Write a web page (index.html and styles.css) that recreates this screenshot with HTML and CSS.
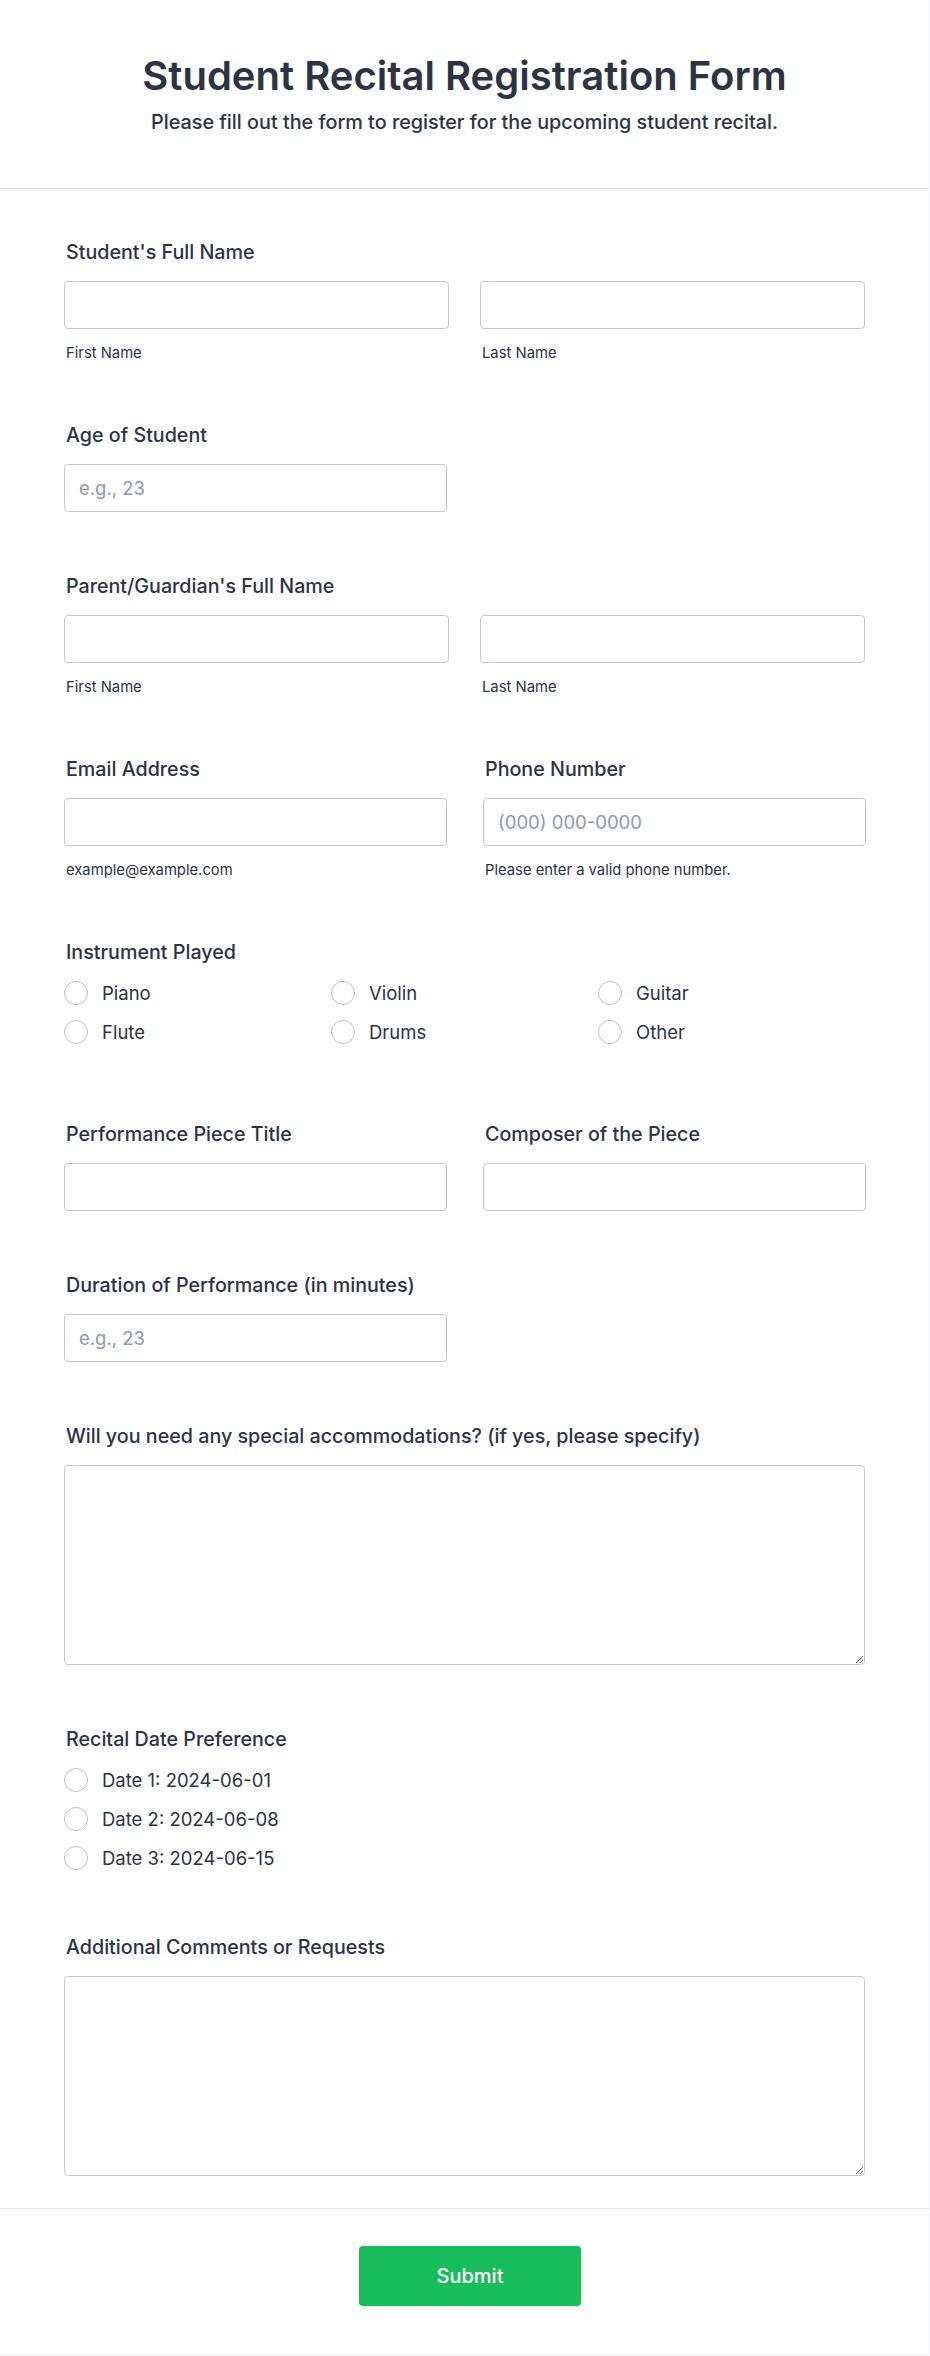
FILE: index.html
```html
<!DOCTYPE html>
<html lang="en">
<head>
<meta charset="utf-8">
<title>Student Recital Registration Form</title>
<link rel="stylesheet" href="styles.css">
</head>
<body>
<form class="form">
  <header class="form-header">
    <h1 class="form-title">Student Recital Registration Form</h1>
    <p class="form-subtitle">Please fill out the form to register for the upcoming student recital.</p>
  </header>

  <div class="form-body">
    <div class="field field-sub">
      <label class="label">Student's Full Name</label>
      <div class="name-row">
        <div class="col"><input class="input" type="text"><span class="sub">First Name</span></div>
        <div class="col"><input class="input" type="text"><span class="sub">Last Name</span></div>
      </div>
    </div>

    <div class="pair">
      <div class="field">
        <label class="label">Age of Student</label>
        <input class="input" type="text" placeholder="e.g., 23">
      </div>
    </div>

    <div class="field field-sub">
      <label class="label">Parent/Guardian's Full Name</label>
      <div class="name-row">
        <div class="col"><input class="input" type="text"><span class="sub">First Name</span></div>
        <div class="col"><input class="input" type="text"><span class="sub">Last Name</span></div>
      </div>
    </div>

    <div class="pair">
      <div class="field field-sub">
        <label class="label">Email Address</label>
        <input class="input" type="email">
        <span class="sub">example@example.com</span>
      </div>
      <div class="field field-sub">
        <label class="label">Phone Number</label>
        <input class="input" type="tel" placeholder="(000) 000-0000">
        <span class="sub">Please enter a valid phone number.</span>
      </div>
    </div>

    <div class="field field-instruments">
      <label class="label">Instrument Played</label>
      <div class="options options-3">
        <label class="option"><span class="radio"></span>Piano</label>
        <label class="option"><span class="radio"></span>Violin</label>
        <label class="option"><span class="radio"></span>Guitar</label>
        <label class="option"><span class="radio"></span>Flute</label>
        <label class="option"><span class="radio"></span>Drums</label>
        <label class="option"><span class="radio"></span>Other</label>
      </div>
    </div>

    <div class="pair">
      <div class="field">
        <label class="label">Performance Piece Title</label>
        <input class="input" type="text">
      </div>
      <div class="field">
        <label class="label">Composer of the Piece</label>
        <input class="input" type="text">
      </div>
    </div>

    <div class="pair">
      <div class="field">
        <label class="label">Duration of Performance (in minutes)</label>
        <input class="input" type="text" placeholder="e.g., 23">
      </div>
    </div>

    <div class="field">
      <label class="label">Will you need any special accommodations? (if yes, please specify)</label>
      <textarea class="textarea"></textarea>
    </div>

    <div class="field field-dates">
      <label class="label">Recital Date Preference</label>
      <div class="options">
        <label class="option"><span class="radio"></span>Date 1: 2024-06-01</label>
        <label class="option"><span class="radio"></span>Date 2: 2024-06-08</label>
        <label class="option"><span class="radio"></span>Date 3: 2024-06-15</label>
      </div>
    </div>

    <div class="field field-last">
      <label class="label">Additional Comments or Requests</label>
      <textarea class="textarea"></textarea>
    </div>
  </div>

  <footer class="form-footer">
    <button class="submit" type="button">Submit</button>
  </footer>
</form>
</body>
</html>
```

FILE: styles.css
```css
* {
  box-sizing: border-box;
}

body {
  margin: 0;
  background: #ffffff;
  font-family: Inter, "Noto Sans", "Liberation Sans", sans-serif;
  color: #2c3345;
}

.form {
  width: 930px;
  border-right: 1px solid #f3f4f7;
  border-bottom: 1px solid #f3f4f7;
}

.form-header {
  text-align: center;
  padding: 52px 0 52px;
  border-bottom: 1px solid #e3e7ee;
}

.form-title {
  margin: 0;
  font-size: 40px;
  line-height: 48px;
  font-weight: 600;
  color: #2c3345;
}

.form-subtitle {
  margin: 8px 0 0;
  font-size: 19.8px;
  line-height: 28px;
  font-weight: 500;
  color: #2c3345;
}

.form-body {
  padding: 49px 64px 32px;
}

.field {
  margin-bottom: 60px;
}

.field-sub {
  margin-bottom: 59px;
}

.field-instruments {
  margin-bottom: 76px;
}

.field-dates {
  margin-bottom: 63px;
}

.field-last {
  margin-bottom: 0;
}

.label {
  display: block;
  font-size: 19.7px;
  line-height: 28px;
  font-weight: 500;
  margin-bottom: 15px;
  padding-left: 2px;
  color: #2c3345;
}

.name-row {
  display: grid;
  grid-template-columns: 1fr 1fr;
  column-gap: 31px;
}

.pair {
  display: grid;
  grid-template-columns: 383px 383px;
  column-gap: 36px;
}

.col {
  display: flex;
  flex-direction: column;
}

.input {
  display: block;
  width: 100%;
  height: 48px;
  border: 1px solid #c3c8d4;
  border-radius: 4px;
  padding: 0 14px;
  font-family: inherit;
  font-size: 18.5px;
  color: #2c3345;
  background: #fff;
  outline: none;
}

.input::placeholder {
  color: #8c9aae;
}

.sub {
  display: block;
  margin-top: 15px;
  font-size: 14.8px;
  line-height: 18px;
  color: #2c3345;
  padding-left: 2px;
}

.textarea {
  display: block;
  width: 100%;
  height: 200px;
  border: 1px solid #c3c8d4;
  border-radius: 4px;
  padding: 12px 14px;
  font-family: inherit;
  font-size: 18px;
  resize: vertical;
  outline: none;
  background: #fff;
}

.options {
  display: grid;
  grid-template-columns: 1fr;
  row-gap: 15px;
  margin-top: 2px;
}

.options-3 {
  grid-template-columns: repeat(3, 1fr);
}

.option {
  display: flex;
  align-items: center;
  gap: 14px;
  height: 24px;
  font-size: 18.5px;
  line-height: 24px;
  color: #2c3345;
}

.radio {
  flex: none;
  width: 24px;
  height: 24px;
  border: 1px solid #b8bfcc;
  border-radius: 50%;
  background: #fff;
}

.form-footer {
  border-top: 1px solid #e3e7ee;
  padding: 37px 0 48px;
  text-align: center;
  background: #ffffff;
}

.submit {
  width: 222px;
  height: 60px;
  margin-left: 11px;
  border: none;
  border-radius: 4px;
  background: #18bd5b;
  color: #ffffff;
  font-family: inherit;
  font-size: 20px;
  font-weight: 500;
}
```
